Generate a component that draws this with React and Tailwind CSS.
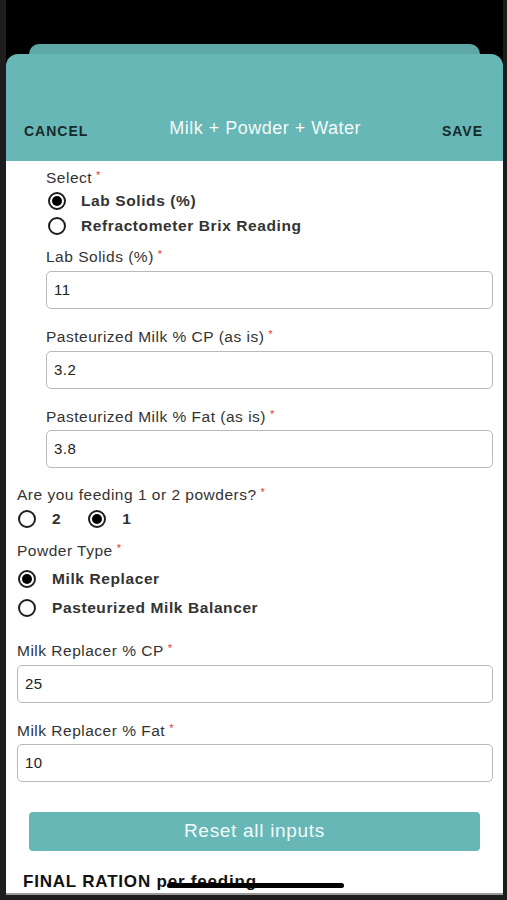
import React from "react";

const Radio = ({ checked }) => (
  <span className="w-[18px] h-[18px] rounded-full border-2 border-[#1f1f1f] flex items-center justify-center shrink-0 bg-white">
    {checked && <span className="w-[10px] h-[10px] rounded-full bg-black"></span>}
  </span>
);

const Label = ({ text, className = "" }) => (
  <p className={`h-[18px] flex items-center text-[15.5px] tracking-[0.5px] text-[#333] ${className}`}>
    {text}
    <span className="text-[#e53935] text-[11px] ml-[4px] -mt-[5px]">*</span>
  </p>
);

const Field = ({ value, className = "" }) => (
  <div
    className={`h-[38px] rounded-[5px] border border-[#b9b9b9] bg-white flex items-center px-[7px] text-[15px] tracking-[0.5px] text-[#222] ${className}`}
  >
    {value}
  </div>
);

const Option = ({ children }) => (
  <span className="text-[15.5px] tracking-[0.6px] font-bold text-[#333]">{children}</span>
);

export default function App() {
  return (
    <div
      className="w-[507px] h-[900px] bg-black flex overflow-hidden relative"
      style={{ fontFamily: '"Liberation Sans", Arial, sans-serif' }}
    >
      {/* left strip */}
      <div className="w-[6px] bg-[#1d1d1d]"></div>

      <div className="flex-1 flex flex-col">
        <div className="h-[44px] bg-black"></div>
        <div className="h-[10px] mx-[23px] rounded-t-[12px] bg-[#5ea8a6]"></div>

        {/* header */}
        <header className="h-[107px] bg-[#66b7b5] rounded-t-[12px] flex items-end justify-between pl-[18px] pr-[20px] pb-[19px]">
          <button className="text-[14px] font-bold text-[#17292a] tracking-[1px]">CANCEL</button>
          <h1 className="text-[18px] tracking-[0.5px] text-[#f4fbfb]">Milk + Powder + Water</h1>
          <button className="text-[14px] font-bold text-[#17292a] tracking-[1px]">SAVE</button>
        </header>

        {/* body */}
        <main className="bg-white h-[732px] flex flex-col">
          <div className="pl-[40px] pr-[10px] flex flex-col">
            <Label text="Select" className="mt-[8px]" />
            <div className="mt-[4px] h-[20px] flex items-center gap-[15px] pl-[2px]">
              <Radio checked />
              <Option>Lab Solids (%)</Option>
            </div>
            <div className="mt-[5px] h-[20px] flex items-center gap-[15px] pl-[2px]">
              <Radio />
              <Option>Refractometer Brix Reading</Option>
            </div>

            <Label text="Lab Solids (%)" className="mt-[12px]" />
            <Field value="11" className="mt-[5px]" />

            <Label text="Pasteurized Milk % CP (as is)" className="mt-[19px]" />
            <Field value="3.2" className="mt-[5px]" />

            <Label text="Pasteurized Milk % Fat (as is)" className="mt-[19px]" />
            <Field value="3.8" className="mt-[4px]" />
          </div>

          <div className="pl-[11px] pr-[10px] flex flex-col">
            <Label text="Are you feeding 1 or 2 powders?" className="mt-[18px]" />
            <div className="mt-[5px] h-[20px] flex items-center pl-[1px]">
              <Radio />
              <span className="ml-[16px]">
                <Option>2</Option>
              </span>
              <span className="ml-[27px]">
                <Radio checked />
              </span>
              <span className="ml-[16px]">
                <Option>1</Option>
              </span>
            </div>

            <Label text="Powder Type" className="mt-[13px]" />
            <div className="mt-[9px] h-[20px] flex items-center gap-[16px] pl-[1px]">
              <Radio checked />
              <Option>Milk Replacer</Option>
            </div>
            <div className="mt-[9px] h-[20px] flex items-center gap-[16px] pl-[1px]">
              <Radio />
              <Option>Pasteurized Milk Balancer</Option>
            </div>

            <Label text="Milk Replacer % CP" className="mt-[24px]" />
            <Field value="25" className="mt-[5px]" />

            <Label text="Milk Replacer % Fat" className="mt-[19px]" />
            <Field value="10" className="mt-[4px]" />
          </div>

          <div className="px-[23px] mt-[30px]">
            <button className="w-full h-[39px] rounded-[4px] bg-[#66b7b5] text-[#f4fbfb] text-[19px] tracking-[0.7px]">
              Reset all inputs
            </button>
          </div>

          <p className="mt-[22px] pl-[17px] h-[18px] flex items-center text-[17px] tracking-[0.8px] font-bold text-[#111]">
            FINAL RATION per feeding
          </p>
        </main>

        <div className="h-[2px] bg-[#9a9a9a]"></div>
        <div className="flex-1 bg-[#1d1d1d]"></div>
      </div>

      {/* right strip */}
      <div className="w-[4px] bg-[#1d1d1d]"></div>

      {/* home indicator */}
      <div className="absolute left-[167px] top-[883px] w-[177px] h-[5px] rounded-full bg-black"></div>
    </div>
  );
}
